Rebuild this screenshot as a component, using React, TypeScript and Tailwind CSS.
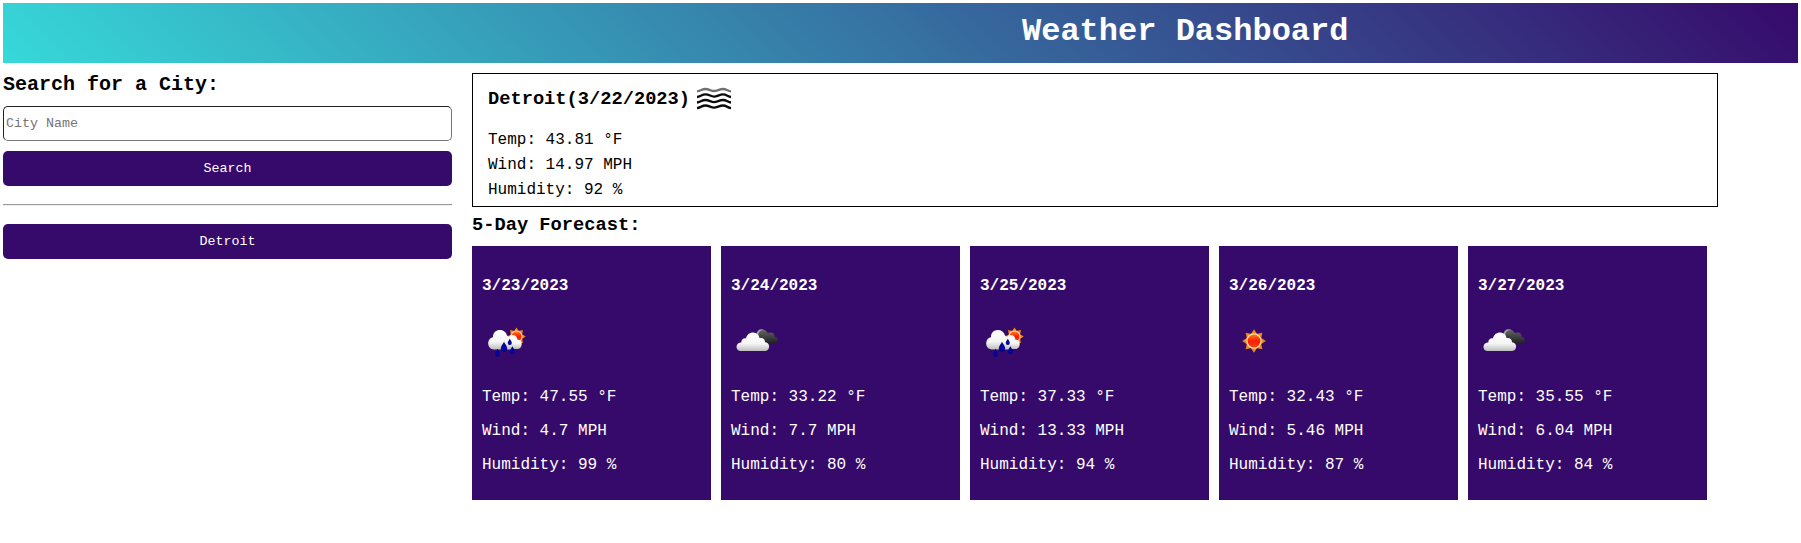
import React from "react";

type IconName = "mist" | "rain" | "clouds" | "sun";

interface Day {
  date: string;
  icon: IconName;
  temp: string;
  wind: string;
  humidity: string;
}

const days: Day[] = [
  { date: "3/23/2023", icon: "rain", temp: "47.55", wind: "4.7", humidity: "99" },
  { date: "3/24/2023", icon: "clouds", temp: "33.22", wind: "7.7", humidity: "80" },
  { date: "3/25/2023", icon: "rain", temp: "37.33", wind: "13.33", humidity: "94" },
  { date: "3/26/2023", icon: "sun", temp: "32.43", wind: "5.46", humidity: "87" },
  { date: "3/27/2023", icon: "clouds", temp: "35.55", wind: "6.04", humidity: "84" },
];

const rays = [0, 45, 90, 135, 180, 225, 270, 315];

function Sun() {
  return (
    <g>
      {rays.map((a) => (
        <path key={a} d="M-3.4 -6.6 L0 -11.8 L3.4 -6.6 Z" fill="#ee8a1c" transform={`rotate(${a})`} />
      ))}
      <circle r="7.7" fill="#fbd9a0" />
      <circle r="6.4" fill="url(#sunCore)" />
    </g>
  );
}

function Drop({ x, y, s }: { x: number; y: number; s: number }) {
  return (
    <path
      d="M0 -5 C1 -2.6 3.2 -0.8 3.2 1.6 A3.2 3.2 0 0 1 -3.2 1.6 C-3.2 -0.8 -1 -2.6 0 -5 Z"
      fill="url(#drop)"
      transform={`translate(${x} ${y}) scale(${s})`}
    />
  );
}

function IconDefs() {
  return (
    <defs>
      <linearGradient id="sunCore" x1="0" y1="0" x2="0" y2="1">
        <stop offset="0" stopColor="#ff7a1a" />
        <stop offset="0.5" stopColor="#fb1c06" />
        <stop offset="1" stopColor="#f5400c" />
      </linearGradient>
      <linearGradient id="cloud" x1="0" y1="0" x2="0" y2="1">
        <stop offset="0" stopColor="#ffffff" />
        <stop offset="0.6" stopColor="#f6f6f6" />
        <stop offset="1" stopColor="#bdbdbd" />
      </linearGradient>
      <linearGradient id="darkCloud" gradientUnits="userSpaceOnUse" x1="0" y1="13" x2="0" y2="27">
        <stop offset="0" stopColor="#6a6a6a" />
        <stop offset="0.45" stopColor="#484848" />
        <stop offset="1" stopColor="#222222" />
      </linearGradient>
      <linearGradient id="drop" x1="0" y1="0" x2="0" y2="1">
        <stop offset="0" stopColor="#050562" />
        <stop offset="0.65" stopColor="#0505b0" />
        <stop offset="1" stopColor="#04046e" />
      </linearGradient>
    </defs>
  );
}

function WeatherIcon({ name }: { name: IconName }) {
  return (
    <svg width="50" height="50" viewBox="0 0 50 50" className="block shrink-0">
      <IconDefs />
      {name === "mist" && (
        <g fill="none" stroke="#0a0a0a" strokeWidth="2.3">
          <path d="M8 17.3 C11 17.1 13 15 16.5 15 S22 17 25 17 S30.5 15 34 15 S39 17.1 42 17.3" stroke="#707070" />
          <path d="M8 23 C11 22.8 13 20.4 16.5 20.4 S22 22.6 25 22.6 S30.5 20.4 34 20.4 S39 22.8 42 23" />
          <path d="M8 28.5 C11 28.3 13 26 16.5 26 S22 28.1 25 28.1 S30.5 26 34 26 S39 28.3 42 28.5" />
          <path d="M8 34.1 C11 33.9 13 31.5 16.5 31.5 S22 33.7 25 33.7 S30.5 31.5 34 31.5 S39 33.9 42 34.1" />
        </g>
      )}
      {name === "sun" && (
        <g transform="translate(25 25)">
          <Sun />
        </g>
      )}
      {name === "clouds" && (
        <g>
          <circle cx="30.6" cy="18.4" r="5.1" fill="#a8a8a8" />
          <g fill="url(#darkCloud)">
            <circle cx="32.2" cy="19" r="4.9" />
            <circle cx="39.5" cy="20.4" r="4" />
            <circle cx="43.8" cy="24" r="3" />
            <rect x="30" y="20.5" width="13.8" height="6.5" />
          </g>
          <path d="M10.2 35 C6.7 35 5.4 32.6 5.5 30.4 C5.8 27.8 8 26.4 10.3 26.5 C10.1 23.5 12.6 21.6 15 22.3 C15.8 18.4 18.8 16.2 22.3 16.4 C26 16.6 28.1 19.2 28.5 22.1 C31.3 21.2 34.2 23.1 34 26.2 C36.6 26.3 38.3 28.3 38.1 30.7 C38 33.3 36.4 35 33.6 35 Z" fill="url(#cloud)" />
        </g>
      )}
      {name === "rain" && (
        <g>
          <g transform="translate(34.5 20.6) scale(0.78)">
            <Sun />
          </g>
          <path d="M27 33 C25 26 25 19.2 30.5 19 C33.7 19 35.2 21 35.5 23.9 C38.3 23.6 39.9 25.6 39.7 28.2 C39.6 31.3 37.8 33 35.3 33 H27 Z" fill="url(#cloud)" />
          <path d="M12 33.5 C8 33.5 6.1 30.4 6.2 27.1 C6.4 23.7 8.5 21.5 11 21.3 C10.7 16.8 14 14 17.8 14 C21.4 14 24.1 16 25 19.4 C28 20.4 29 24 29 33.5 Z" fill="url(#cloud)" />
          <Drop x={15.6} y={36.8} s={0.8} />
          <Drop x={22} y={30.8} s={1} />
          <Drop x={27.8} y={26} s={0.64} />
          <Drop x={30.4} y={34.2} s={0.8} />
        </g>
      )}
    </svg>
  );
}

function DayCard({ day }: { day: Day }) {
  return (
    <article className="flex h-[254px] w-[239px] flex-col bg-[#360a6b] px-2.5 pt-[31px] text-base leading-[18px] text-white">
      <h4 className="font-bold">{day.date}</h4>
      <div className="mt-[21px] mb-[22px]">
        <WeatherIcon name={day.icon} />
      </div>
      <div className="flex flex-col gap-4">
        <p>Temp: {day.temp} °F</p>
        <p>Wind: {day.wind} MPH</p>
        <p>Humidity: {day.humidity} %</p>
      </div>
    </article>
  );
}

export default function App() {
  return (
    <div className="h-[543px] bg-white p-[3px] font-['Liberation_Mono',monospace] text-black">
      <header className="flex h-[60px] bg-[linear-gradient(45deg,#36d9d9,#360a6b)] pl-[1019px] pt-[11px]">
        <h1 className="text-[32px] leading-[36px] font-bold text-white">Weather Dashboard</h1>
      </header>
      <div className="flex gap-5 pt-2.5">
        <aside className="flex w-[449px] flex-col">
          <h2 className="text-[20px] leading-[23px] font-bold">Search for a City:</h2>
          <input
            type="text"
            placeholder="City Name"
            className="mt-2.5 h-[35px] rounded-[5px] border border-t-[#212121] border-r-[#767676] border-b-[#767676] border-l-[#212121] px-0.5 text-[13.333px] placeholder:text-[#757575]"
          />
          <button className="mt-2.5 h-[35px] rounded-[5px] bg-[#360a6b] text-[13.333px] text-white">Search</button>
          <hr className="my-[18px] h-0.5 border-t border-b border-t-[#9a9a9a] border-b-[#eeeeee]" />
          <button className="h-[35px] rounded-[5px] bg-[#360a6b] text-[13.333px] text-white">Detroit</button>
        </aside>
        <main className="flex flex-col">
          <section className="flex h-[134px] w-[1246px] flex-col border border-black px-[15px]">
            <div className="flex h-[50px] items-center">
              <h3 className="w-[201px] text-[18.72px] leading-[21px] font-bold whitespace-nowrap">Detroit(3/22/2023)</h3>
              <WeatherIcon name="mist" />
            </div>
            <div className="pt-1 text-base leading-[25px]">
              <p>Temp: 43.81 °F</p>
              <p>Wind: 14.97 MPH</p>
              <p>Humidity: 92 %</p>
            </div>
          </section>
          <h3 className="mt-2 mb-2.5 text-[18.72px] leading-[21px] font-bold">5-Day Forecast:</h3>
          <div className="flex gap-2.5">
            {days.map((day) => (
              <DayCard key={day.date} day={day} />
            ))}
          </div>
        </main>
      </div>
    </div>
  );
}
